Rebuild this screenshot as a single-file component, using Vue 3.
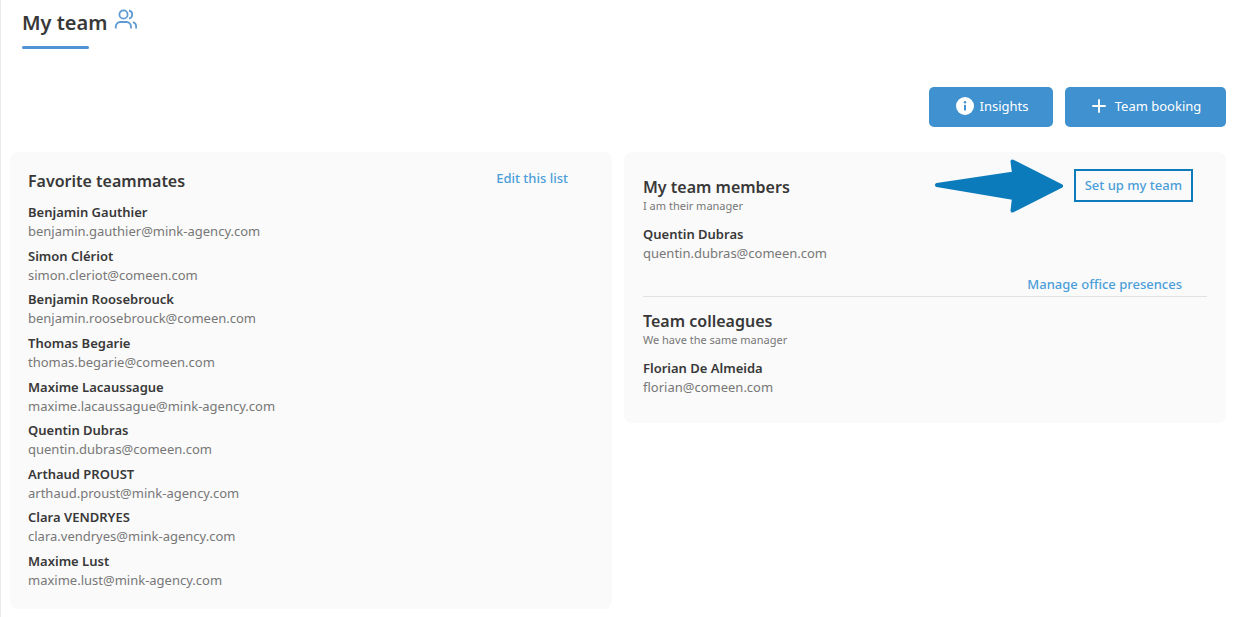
<script setup>
const favorites = [
  { name: 'Benjamin Gauthier', email: 'benjamin.gauthier@mink-agency.com' },
  { name: 'Simon Clériot', email: 'simon.cleriot@comeen.com' },
  { name: 'Benjamin Roosebrouck', email: 'benjamin.roosebrouck@comeen.com' },
  { name: 'Thomas Begarie', email: 'thomas.begarie@comeen.com' },
  { name: 'Maxime Lacaussague', email: 'maxime.lacaussague@mink-agency.com' },
  { name: 'Quentin Dubras', email: 'quentin.dubras@comeen.com' },
  { name: 'Arthaud PROUST', email: 'arthaud.proust@mink-agency.com' },
  { name: 'Clara VENDRYES', email: 'clara.vendryes@mink-agency.com' },
  { name: 'Maxime Lust', email: 'maxime.lust@mink-agency.com' },
]
const members = [{ name: 'Quentin Dubras', email: 'quentin.dubras@comeen.com' }]
const colleagues = [{ name: 'Florian De Almeida', email: 'florian@comeen.com' }]
</script>

<template>
  <main class="page">
    <header class="title">
      <h1>My team</h1>
      <svg class="title-icon" viewBox="0 0 24 22" fill="none" stroke="currentColor" stroke-width="1.8" aria-hidden="true">
        <circle cx="9.5" cy="5.5" r="4.1" />
        <path d="M15 1.5a4.1 4.1 0 0 1 0 8" />
        <path d="M1.8 19.6v-2.2a4.4 4.4 0 0 1 4.4-4.4h6.4a4.4 4.4 0 0 1 4.4 4.4v2.2" />
        <path d="M18.8 13.2a4.2 4.2 0 0 1 3.3 4.1v2.3" />
      </svg>
    </header>

    <div class="actions">
      <button type="button" class="btn">
        <svg class="icon-info" viewBox="0 0 18 18" aria-hidden="true">
          <circle cx="9" cy="9" r="9" fill="#fff" />
          <circle cx="9" cy="5.3" r="1.2" fill="#3f91cf" />
          <rect x="8" y="7.8" width="2" height="5.8" rx="0.6" fill="#3f91cf" />
        </svg>
        Insights
      </button>
      <button type="button" class="btn btn-booking">
        <svg class="icon-plus" viewBox="0 0 14 14" fill="none" stroke="#fff" stroke-width="1.9" stroke-linecap="round" aria-hidden="true">
          <path d="M7 1v12M1 7h12" />
        </svg>
        Team booking
      </button>
    </div>

    <div class="columns">
      <section class="card favorites">
        <div class="card-head">
          <h2>Favorite teammates</h2>
          <a href="#" class="link">Edit this list</a>
        </div>
        <ul class="people">
          <li v-for="p in favorites" :key="p.email">
            <strong>{{ p.name }}</strong>
            <span>{{ p.email }}</span>
          </li>
        </ul>
      </section>

      <section class="card team">
        <div class="group">
          <div class="team-head">
            <div>
              <h2>My team members</h2>
              <p class="hint">I am their manager</p>
            </div>
            <div class="setup">
              <svg class="arrow" viewBox="0 0 128 54" aria-hidden="true">
                <path d="M2 26 L79 14.5 L77.5 2.5 L126 27 L77.5 51.5 L79 39 Z" fill="#0b7bbb" stroke="#0b7bbb" stroke-width="4" stroke-linejoin="round" />
              </svg>
              <a href="#" class="link boxed">Set up my team</a>
            </div>
          </div>
          <ul class="people">
            <li v-for="p in members" :key="p.email">
              <strong>{{ p.name }}</strong>
              <span>{{ p.email }}</span>
            </li>
          </ul>
          <a href="#" class="link manage">Manage office presences</a>
        </div>
        <div class="group colleagues">
          <h2>Team colleagues</h2>
          <p class="hint">We have the same manager</p>
          <ul class="people">
            <li v-for="p in colleagues" :key="p.email">
              <strong>{{ p.name }}</strong>
              <span>{{ p.email }}</span>
            </li>
          </ul>
        </div>
      </section>
    </div>
  </main>
</template>

<style>
body {
  margin: 0;
  background: #fff;
}
</style>

<style scoped>
.page {
  box-sizing: border-box;
  min-height: 100vh;
  display: flex;
  flex-direction: column;
  padding: 8px 9px 8px 9px;
  border-left: 1px solid #ebebeb;
  color: #383838;
  font-family: "Noto Sans", "Open Sans", sans-serif;
  font-size: 13px;
}
h1,
h2,
p,
ul {
  margin: 0;
  padding: 0;
}
.title {
  display: flex;
  align-items: flex-start;
  gap: 7px;
  margin-left: 12px;
}
h1 {
  font-size: 20px;
  line-height: 30px;
  font-weight: 600;
}
h1::after {
  content: "";
  display: block;
  width: 67px;
  height: 3px;
  margin-top: 8px;
  border-radius: 2px;
  background: #4f93d2;
}
.title-icon {
  width: 24px;
  height: 22px;
  margin-top: 1px;
  color: #5f9bd3;
}
.actions {
  display: flex;
  justify-content: flex-end;
  gap: 12px;
  margin-top: 38px;
}
.btn {
  display: flex;
  align-items: center;
  justify-content: center;
  gap: 6px;
  height: 40px;
  min-width: 124px;
  padding: 0 24px 2px 26px;
  border: 0;
  border-radius: 5px;
  background: #3f91cf;
  color: #fff;
  font: inherit;
  cursor: pointer;
}
.btn-booking {
  gap: 9px;
  min-width: 161px;
}
.icon-info {
  width: 18px;
  height: 18px;
}
.icon-plus {
  width: 14px;
  height: 14px;
}
.columns {
  flex: 1;
  display: grid;
  grid-template-columns: 1fr 1fr;
  gap: 12px;
  margin-top: 25px;
}
.card {
  border-radius: 8px;
  background: #fafafa;
}
.favorites {
  display: flex;
  flex-direction: column;
  padding: 16px 44px 19px 18px;
}
.card-head,
.team-head {
  display: flex;
  justify-content: space-between;
  align-items: flex-start;
}
h2 {
  font-size: 16px;
  line-height: 26px;
  font-weight: 600;
}
.link {
  color: #4b9ed9;
  line-height: 20px;
  font-weight: 500;
  text-decoration: none;
}
.people {
  list-style: none;
}
.people li {
  display: flex;
  flex-direction: column;
  line-height: 19px;
}
.people strong {
  font-weight: 600;
}
.people span {
  color: #777;
}
.favorites .people {
  flex: 1;
  display: flex;
  flex-direction: column;
  justify-content: space-between;
  margin-top: 9px;
}
.team {
  align-self: start;
  padding: 16px 19px 26px;
}
.team-head h2 {
  margin-top: 6px;
}
.hint {
  color: #777;
  font-size: 11px;
  line-height: 12px;
}
.group .people {
  margin-top: 13px;
}
.group {
  display: flex;
  flex-direction: column;
  border-bottom: 1px solid #e2e2e2;
}
.colleagues {
  padding-top: 11px;
  border-bottom: 0;
}
.setup {
  position: relative;
  margin: 1px 14px 0 0;
}
.boxed {
  display: block;
  padding: 4px 9px 5px;
  border: 2px solid #0b7bbb;
}
.arrow {
  position: absolute;
  right: calc(100% + 11px);
  top: -10px;
  width: 128px;
  height: 54px;
}
.manage {
  align-self: flex-end;
  margin: 11px 25px 2px 0;
}
</style>
